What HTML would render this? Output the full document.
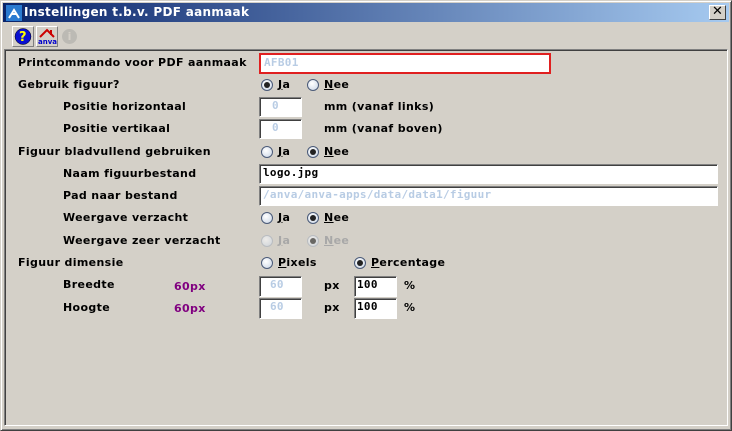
<!DOCTYPE html>
<html><head><meta charset="utf-8"><style>
*{margin:0;padding:0;box-sizing:border-box}
body{width:732px;height:431px;background:#d4d0c8;position:relative;overflow:hidden;font-family:"DejaVu Sans",Verdana,sans-serif;font-weight:bold;font-size:11px;color:#000}
.win{position:absolute;left:0;top:0;width:732px;height:431px;border:1px solid;border-color:#d4d0c8 #404040 #404040 #d4d0c8;box-shadow:inset 1px 1px #fff,inset -1px -1px #808080}
.title{position:absolute;left:3px;top:3px;width:726px;height:19px;background:linear-gradient(90deg,#0a246a,#a6caf0)}
.title span{position:absolute;left:21px;top:2px;color:#fff;font-size:12px;letter-spacing:0.3px;font-family:"DejaVu Sans",sans-serif}
.ico{position:absolute;left:3px;top:2px;width:16px;height:16px;background:#2a7ad0}
.x{position:absolute;left:709px;top:5px;width:17px;height:15px;background:#d4d0c8;border:1px solid;border-color:#fff #404040 #404040 #fff;font-size:13px;text-align:center;line-height:12px;font-family:"DejaVu Sans",sans-serif}
.tb{position:absolute;top:26px;width:22px;height:21px;border:1px solid;border-color:#fff #808080 #808080 #fff}
.panel{position:absolute;left:4px;top:49px;width:724px;height:377px;border:1px solid;border-color:#808080 #fff #fff #808080;box-shadow:inset 1px 1px #404040}
.l{position:absolute;white-space:nowrap;line-height:14px;letter-spacing:0.35px}
.in{position:absolute;background:#fff;border:1px solid;border-color:#808080 #fff #fff #808080;box-shadow:inset 1px 1px #404040;font-family:"DejaVu Sans Mono",monospace;font-size:11px;line-height:16px;padding-left:3px;white-space:nowrap;overflow:hidden;letter-spacing:0.3px}
.dis{color:#b8cce4}
.r{position:absolute;width:12px;height:12px;border-radius:50%;border:1px solid #4a5a78;background:radial-gradient(circle at 40% 35%,#fff,#c8d4e4)}
.r.on::after{content:"";position:absolute;left:2px;top:2px;width:6px;height:6px;border-radius:50%;background:#222}
.r.g{border-color:#a8b0bc;opacity:.6}
.u{text-decoration:underline}
.p{color:#800080}
</style></head><body>
<div class="win"></div>
<div class="title"><div class="ico"><svg width="16" height="16"><path d="M3 13 L8 5 L13 13 M5 9 L11 9" stroke="#fff" stroke-width="2" fill="none"/></svg></div><span>Instellingen t.b.v. PDF aanmaak</span><div class="x" style="left:706px;top:2px">✕</div></div>
<div class="tb" style="left:12px"><svg width="20" height="19"><circle cx="10" cy="9.5" r="8" fill="#0a10d0" stroke="#000" stroke-width="0.5"/><text x="6" y="14" font-size="13" font-weight="bold" fill="#ff0" font-family="DejaVu Sans">?</text></svg></div>
<div class="tb" style="left:36px"><svg width="20" height="19"><path d="M3 10 L10 3 L17 10" stroke="#c00" stroke-width="2" fill="none"/><rect x="13" y="3" width="2" height="5" fill="#c00"/><text x="1" y="17" font-size="7" fill="#00c" font-weight="bold" font-family="DejaVu Sans">anva</text></svg></div>
<div style="position:absolute;left:62px;top:29px;width:15px;height:15px;border-radius:50%;background:#bcbab4;color:#d4d0c8;font-size:11px;text-align:center;line-height:15px">i</div>
<div class="panel"></div>

<div class="l" style="left:18px;top:56px">Printcommando voor PDF aanmaak</div>
<div class="in dis" style="left:259px;top:53px;width:292px;height:21px;border:2px solid #e02020;box-shadow:none;line-height:16px">AFB01</div>

<div class="l" style="left:18px;top:78px">Gebruik figuur?</div>
<div class="r on" style="left:261px;top:79px"></div><div class="l" style="left:278px;top:78px"><span class="u">J</span>a</div>
<div class="r" style="left:307px;top:79px"></div><div class="l" style="left:324px;top:78px"><span class="u">N</span>ee</div>

<div class="l" style="left:63px;top:100px">Positie horizontaal</div>
<div class="in dis" style="left:259px;top:97px;width:43px;height:20px;padding-left:12px">0</div>
<div class="l" style="left:324px;top:100px">mm (vanaf links)</div>
<div class="l" style="left:63px;top:122px">Positie vertikaal</div>
<div class="in dis" style="left:259px;top:119px;width:43px;height:20px;padding-left:12px">0</div>
<div class="l" style="left:324px;top:122px">mm (vanaf boven)</div>

<div class="l" style="left:18px;top:145px">Figuur bladvullend gebruiken</div>
<div class="r" style="left:261px;top:146px"></div><div class="l" style="left:278px;top:145px"><span class="u">J</span>a</div>
<div class="r on" style="left:307px;top:146px"></div><div class="l" style="left:324px;top:145px"><span class="u">N</span>ee</div>

<div class="l" style="left:63px;top:167px">Naam figuurbestand</div>
<div class="in" style="left:259px;top:164px;width:459px;height:20px;font-weight:bold">logo.jpg</div>
<div class="l" style="left:63px;top:189px">Pad naar bestand</div>
<div class="in dis" style="left:259px;top:186px;width:459px;height:20px;font-weight:bold">/anva/anva-apps/data/data1/figuur</div>

<div class="l" style="left:63px;top:211px">Weergave verzacht</div>
<div class="r" style="left:261px;top:212px"></div><div class="l" style="left:278px;top:211px"><span class="u">J</span>a</div>
<div class="r on" style="left:307px;top:212px"></div><div class="l" style="left:324px;top:211px"><span class="u">N</span>ee</div>
<div class="l" style="left:63px;top:234px">Weergave zeer verzacht</div>
<div class="r g" style="left:261px;top:235px"></div><div class="l" style="left:278px;top:234px;color:#a8a8a8"><span class="u">J</span>a</div>
<div class="r on g" style="left:307px;top:235px"></div><div class="l" style="left:324px;top:234px;color:#a8a8a8"><span class="u">N</span>ee</div>

<div class="l" style="left:18px;top:256px">Figuur dimensie</div>
<div class="r" style="left:261px;top:257px"></div><div class="l" style="left:278px;top:256px"><span class="u">P</span>ixels</div>
<div class="r on" style="left:354px;top:257px"></div><div class="l" style="left:371px;top:256px"><span class="u">P</span>ercentage</div>

<div class="l" style="left:63px;top:278px">Breedte</div>
<div class="l p" style="left:174px;top:280px">60px</div>
<div class="in dis" style="left:259px;top:276px;width:43px;height:21px;font-weight:bold;padding-left:10px">60</div>
<div class="l" style="left:324px;top:279px">px</div>
<div class="in" style="left:354px;top:276px;width:43px;height:21px;font-weight:bold;padding-left:2px">100</div>
<div class="l" style="left:404px;top:279px">%</div>

<div class="l" style="left:63px;top:301px">Hoogte</div>
<div class="l p" style="left:174px;top:302px">60px</div>
<div class="in dis" style="left:259px;top:298px;width:43px;height:21px;font-weight:bold;padding-left:10px">60</div>
<div class="l" style="left:324px;top:301px">px</div>
<div class="in" style="left:354px;top:298px;width:43px;height:21px;font-weight:bold;padding-left:2px">100</div>
<div class="l" style="left:404px;top:301px">%</div>
</body></html>
